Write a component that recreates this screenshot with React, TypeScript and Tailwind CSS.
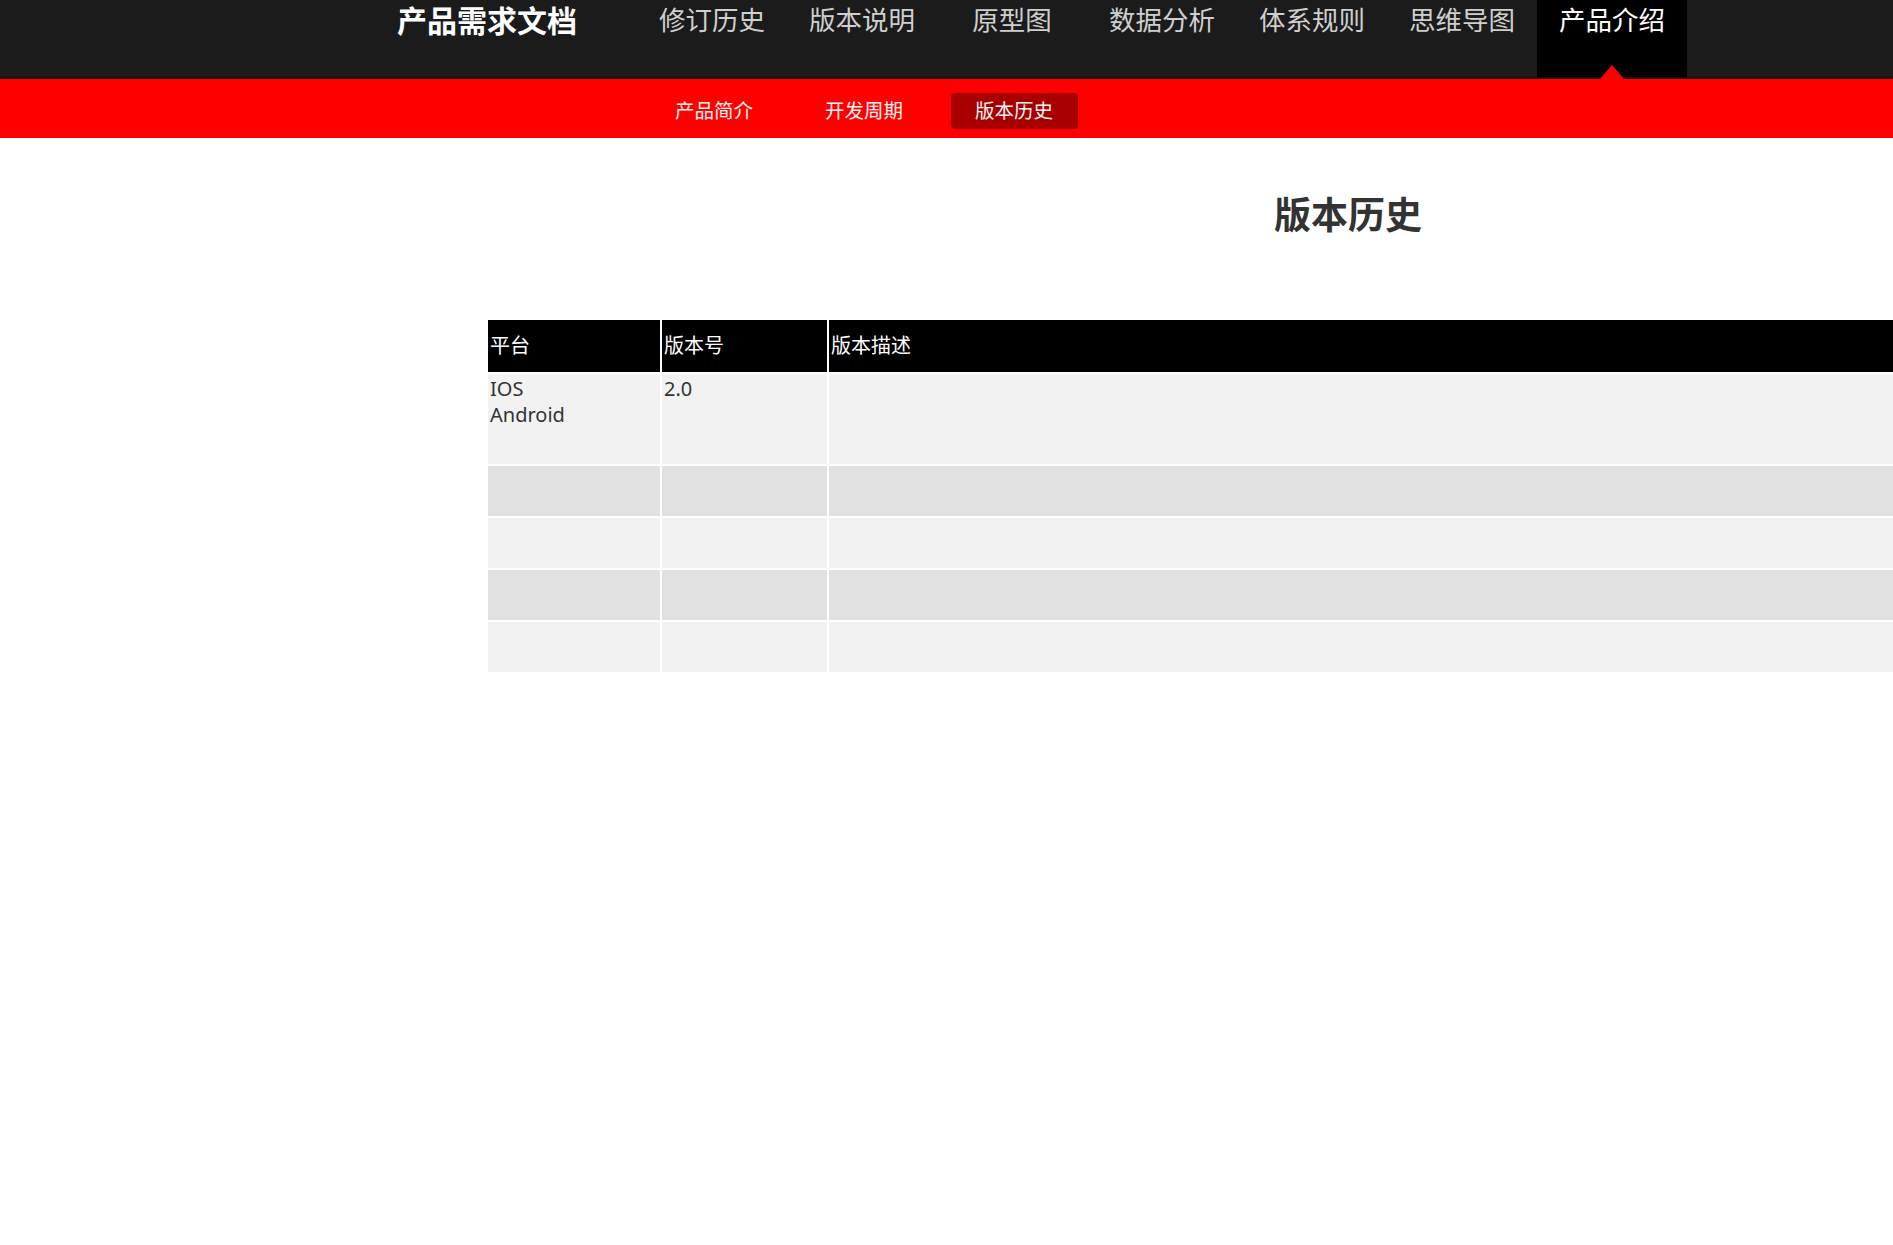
import React from "react";

const navItems = ["修订历史", "版本说明", "原型图", "数据分析", "体系规则", "思维导图", "产品介绍"];
const subItems = ["产品简介", "开发周期", "版本历史"];

export default function App() {
  return (
    <div className="min-h-screen w-full overflow-hidden bg-white font-['Noto_Sans','Noto_Sans_CJK_SC',sans-serif]">
      {/* Top header */}
      <header className="h-[79px] w-full border-b-2 border-[#2a0000] bg-[#1b1b1b]">
        <div className="flex h-full">
          <div className="ml-[397px] w-[240px] text-[30px] font-bold leading-[42px] text-white">产品需求文档</div>
          <nav className="flex h-full">
            {navItems.map((item, i) => {
              const active = i === navItems.length - 1;
              return (
                <div
                  key={item}
                  className={
                    active
                      ? "relative h-full w-[150px] bg-black text-center text-[26.5px] leading-[40px] text-white"
                      : "relative h-full w-[150px] text-center text-[26.5px] leading-[40px] text-[#cfcfcf]"
                  }
                >
                  {item}
                  {active && (
                    <span className="absolute bottom-[-2px] left-1/2 h-0 w-0 -translate-x-1/2 border-x-[12px] border-b-[14px] border-x-transparent border-b-[#ff0000]" />
                  )}
                </div>
              );
            })}
          </nav>
        </div>
      </header>

      {/* Sub navigation */}
      <div className="flex h-[59px] w-full items-center bg-[#ff0000] pt-[5px]">
        <div className="ml-[639px] flex">
          {subItems.map((item, i) => {
            const active = i === subItems.length - 1;
            return (
              <div key={item} className="flex w-[150px] justify-center">
                <div
                  className={
                    active
                      ? "flex h-[36px] w-[127px] items-center justify-center rounded-[4px] bg-[#a80000] text-[19.5px] text-[#f4f4f4]"
                      : "flex h-[36px] w-[127px] items-center justify-center text-[19.5px] text-[#f4f4f4]"
                  }
                >
                  {item}
                </div>
              </div>
            );
          })}
        </div>
      </div>

      {/* Content */}
      <main className="ml-[488px] w-[1720px]">
        <h1 className="mt-[52px] text-center text-[37px] font-bold leading-[50px] text-[#333333]">版本历史</h1>
        <table className="-ml-[2px] mt-[78px] w-[1724px] table-fixed border-separate border-spacing-[2px] text-[20px]">
          <colgroup>
            <col className="w-[172px]" />
            <col className="w-[165px]" />
            <col />
          </colgroup>
          <thead>
            <tr>
              <th className="h-[52px] bg-black px-[2px] text-left align-middle font-normal text-white">平台</th>
              <th className="h-[52px] bg-black px-[2px] text-left align-middle font-normal text-white">版本号</th>
              <th className="h-[52px] bg-black px-[2px] text-left align-middle font-normal text-white">版本描述</th>
            </tr>
          </thead>
          <tbody className="text-[#333333]">
            <tr>
              <td className="h-[90px] bg-[#f2f2f2] px-[2px] pt-[2px] align-top leading-[26px]">
                IOS
                <br />
                Android
              </td>
              <td className="h-[90px] bg-[#f2f2f2] px-[2px] pt-[2px] align-top leading-[26px]">2.0</td>
              <td className="h-[90px] bg-[#f2f2f2] px-[2px] pt-[2px] align-top leading-[26px]"></td>
            </tr>
            <tr>
              <td className="h-[50px] bg-[#e2e2e2]"></td>
              <td className="h-[50px] bg-[#e2e2e2]"></td>
              <td className="h-[50px] bg-[#e2e2e2]"></td>
            </tr>
            <tr>
              <td className="h-[50px] bg-[#f2f2f2]"></td>
              <td className="h-[50px] bg-[#f2f2f2]"></td>
              <td className="h-[50px] bg-[#f2f2f2]"></td>
            </tr>
            <tr>
              <td className="h-[50px] bg-[#e2e2e2]"></td>
              <td className="h-[50px] bg-[#e2e2e2]"></td>
              <td className="h-[50px] bg-[#e2e2e2]"></td>
            </tr>
            <tr>
              <td className="h-[50px] bg-[#f2f2f2]"></td>
              <td className="h-[50px] bg-[#f2f2f2]"></td>
              <td className="h-[50px] bg-[#f2f2f2]"></td>
            </tr>
          </tbody>
        </table>
      </main>
    </div>
  );
}
